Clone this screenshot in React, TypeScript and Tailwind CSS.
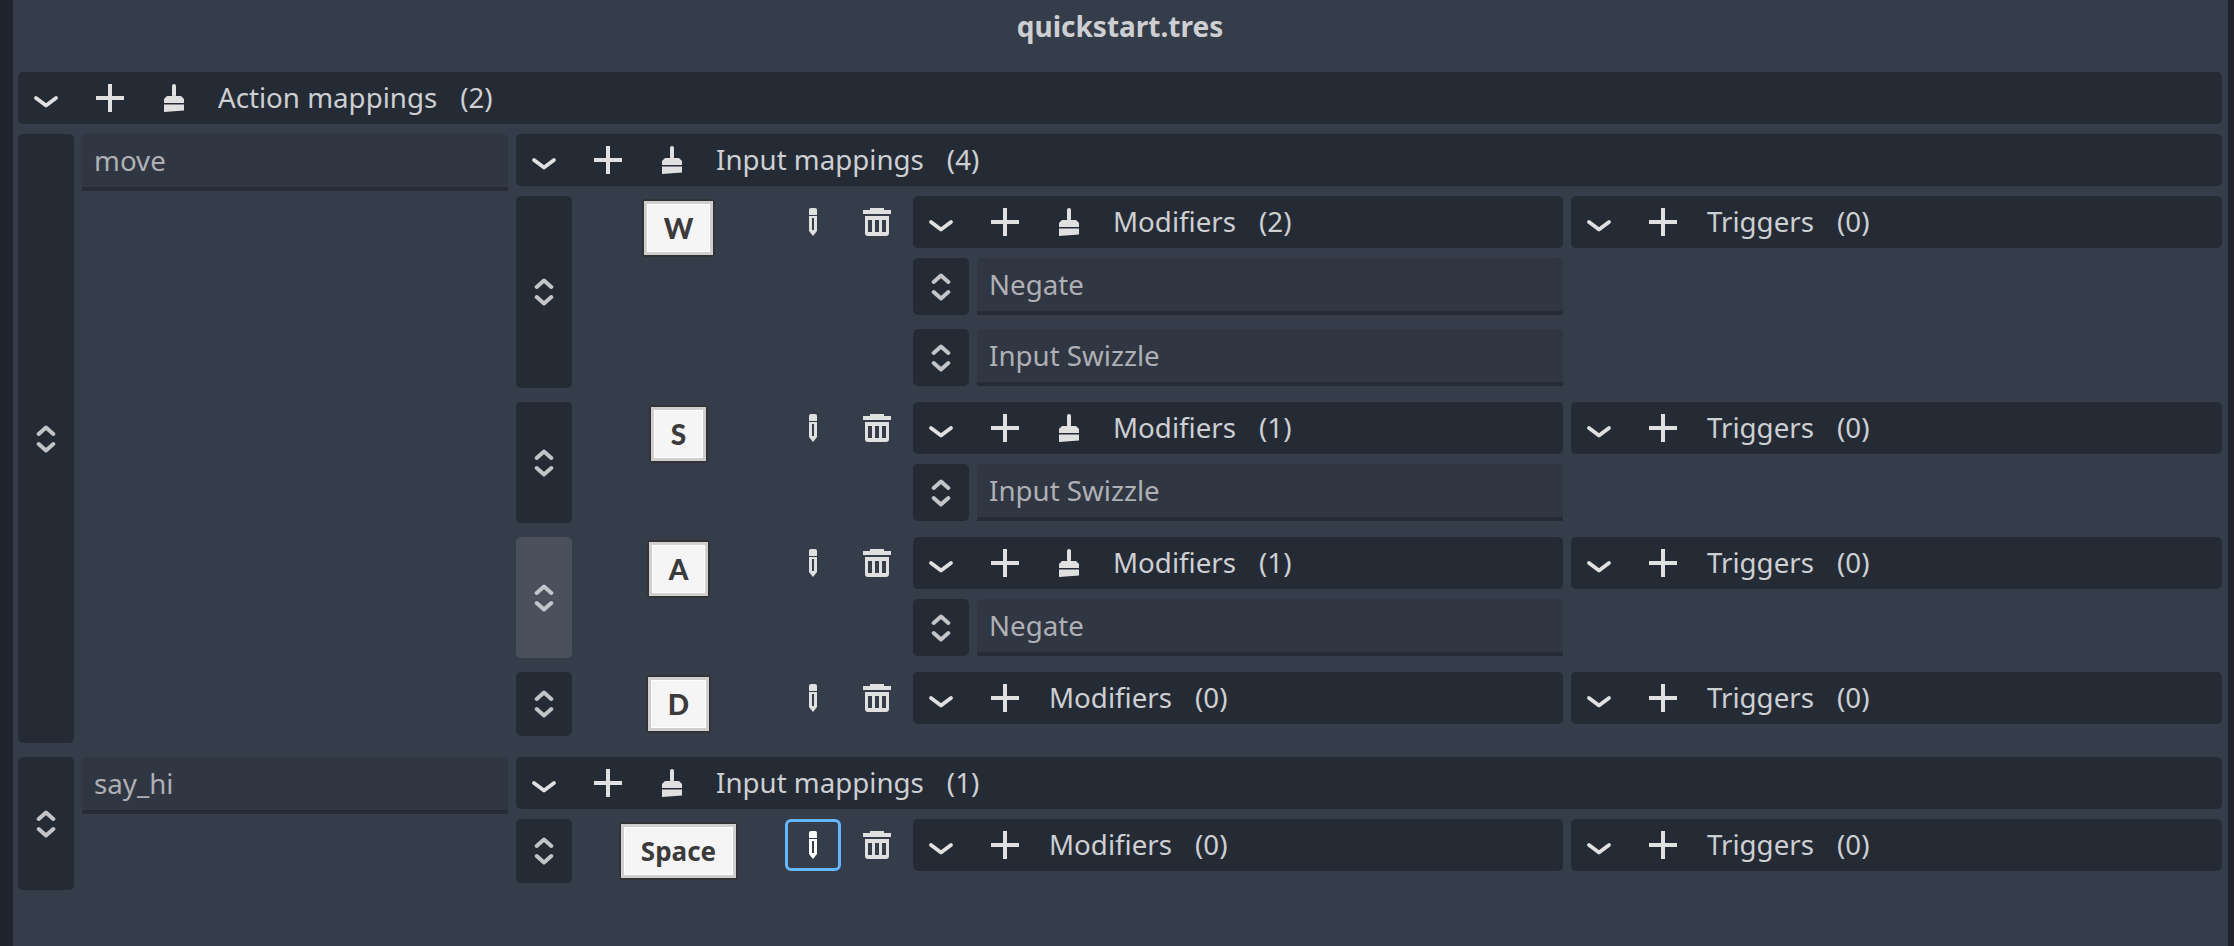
import React from "react";

function Chevron() {
  return (
    <svg width="28" height="28" viewBox="0 0 28 28" fill="none">
      <polyline points="4,14 14,21.5 24,14" stroke="#e0e0e0" strokeWidth="3.8" strokeLinecap="round" strokeLinejoin="round" />
    </svg>
  );
}

function Plus() {
  return (
    <svg width="28" height="28" viewBox="0 0 28 28" fill="#e0e0e0">
      <rect x="12" y="0" width="4" height="28" />
      <rect x="0" y="12" width="28" height="4" />
    </svg>
  );
}

function Brush() {
  return (
    <svg width="20" height="28" viewBox="0 0 20 28" fill="#e0e0e0">
      <rect x="8" y="0" width="4" height="13" rx="2" />
      <path d="M0 19V15L3 12H17L20 15V19Z" />
      <path d="M0 20.5H20V26.5L0 28Z" />
    </svg>
  );
}

function Pencil({ color = "#e0e0e0" }: { color?: string }) {
  return (
    <svg width="8" height="28" viewBox="0 0 8 28" fill={color}>
      <path d="M0 7V2A2 2 0 0 1 2 0H6A2 2 0 0 1 8 2V7Z" />
      <path fillRule="evenodd" d="M0 8H8V23L4 28L0 23ZM3 10V22H5V10Z" />
    </svg>
  );
}

function Trash() {
  return (
    <svg width="28" height="28" viewBox="0 0 28 28" fill="#e0e0e0">
      <path d="M7 0H21V2H28V6H0V2H7Z" />
      <path fillRule="evenodd" d="M2 8H26V25A3 3 0 0 1 23 28H5A3 3 0 0 1 2 25ZM5 12V24H9V12ZM12 12V24H16V12ZM19 12V24H23V12Z" />
    </svg>
  );
}

function Reorder() {
  return (
    <svg width="20" height="28" viewBox="0 0 20 28" fill="none">
      <polyline points="2.7,9 10,2.6 17.3,9" stroke="#c2c4c8" strokeWidth="4" strokeLinecap="round" strokeLinejoin="round" />
      <polyline points="2.7,19 10,25.4 17.3,19" stroke="#c2c4c8" strokeWidth="4" strokeLinecap="round" strokeLinejoin="round" />
    </svg>
  );
}

function IconButton({ children }: { children: React.ReactNode }) {
  return <div className="flex h-[52px] w-14 shrink-0 items-center justify-center">{children}</div>;
}

function Header({ title, count, clear }: { title: string; count: number; clear?: boolean }) {
  return (
    <div className="flex h-[52px] items-center gap-2 rounded-[5px] bg-[#252b35] pb-px text-[27.7px] text-[#cdcfd2]">
      <IconButton>
        <Chevron />
      </IconButton>
      <IconButton>
        <Plus />
      </IconButton>
      {clear && (
        <IconButton>
          <Brush />
        </IconButton>
      )}
      <span className="ml-2">{title}</span>
      <span className="ml-[15px]">({count})</span>
    </div>
  );
}

function ReorderBar({ hover }: { hover?: boolean }) {
  return (
    <div
      className={
        hover
          ? "flex w-14 shrink-0 items-center justify-center self-stretch rounded-[5px] bg-[#4a515d]"
          : "flex w-14 shrink-0 items-center justify-center self-stretch rounded-[5px] bg-[#252b35]"
      }
    >
      <Reorder />
    </div>
  );
}

function TextField({ value }: { value: string }) {
  return (
    <div className="flex h-[57px] flex-1 items-center rounded-t-[5px] border-b-4 border-[#262b35] bg-[#303642] px-3 pt-px text-[27.7px] text-[#aeb0b5]">
      {value}
    </div>
  );
}

function Modifier({ name }: { name: string }) {
  return (
    <div className="flex gap-2">
      <ReorderBar />
      <TextField value={name} />
    </div>
  );
}

function Key({ label }: { label: string }) {
  const word = label.length > 1;
  return (
    <div className="rounded-[4px] border-2 border-[#333336]">
      <div
        className={
          word
            ? "flex h-[54px] items-center justify-center border-[3px] border-[#cfcfcf] bg-[#f5f5f5] px-[17px] text-[26px] font-bold text-[#3b3b3b] shadow-[inset_0_0_0_1px_#ffffff]"
            : "flex h-[54px] items-center justify-center border-[3px] border-[#cfcfcf] bg-[#f5f5f5] px-[17px] font-['Lato',sans-serif] text-[28px] font-black text-[#3b3b3b] shadow-[inset_0_0_0_1px_#ffffff]"
        }
      >
        {label}
      </div>
    </div>
  );
}

type Mapping = { key: string; modifiers: string[]; hover?: boolean; focused?: boolean };

function MappingRow({ mapping }: { mapping: Mapping }) {
  const { key, modifiers, hover, focused } = mapping;
  return (
    <div className="flex min-h-16 gap-2">
      <ReorderBar hover={hover} />
      <div className="flex w-[197px] shrink-0 items-start justify-center pt-[3px]">
        <Key label={key} />
      </div>
      {focused ? (
        <div className="flex h-[52px] w-14 shrink-0 items-center justify-center rounded-[6px] border-[3px] border-[#66b5ff]">
          <Pencil color="#ffffff" />
        </div>
      ) : (
        <IconButton>
          <Pencil />
        </IconButton>
      )}
      <IconButton>
        <Trash />
      </IconButton>
      <div className="grid flex-1 grid-cols-[650px_1fr] items-start gap-2">
        <div className="flex flex-col pb-[2px]">
          <Header title="Modifiers" count={modifiers.length} clear={modifiers.length > 0} />
          {modifiers.length > 0 && (
            <div className="mt-[10px] flex flex-col gap-[14px]">
              {modifiers.map((m) => (
                <Modifier key={m} name={m} />
              ))}
            </div>
          )}
        </div>
        <Header title="Triggers" count={0} />
      </div>
    </div>
  );
}

function ActionRow({ name, mappings }: { name: string; mappings: Mapping[] }) {
  return (
    <div className="flex gap-2">
      <ReorderBar />
      <div className="w-[426px] shrink-0">
        <TextField value={name} />
      </div>
      <div className="flex min-w-0 flex-1 flex-col pb-[7px]">
        <Header title="Input mappings" count={mappings.length} clear />
        <div className="mt-[10px] flex flex-col gap-[14px]">
          {mappings.map((m) => (
            <MappingRow key={m.key} mapping={m} />
          ))}
        </div>
      </div>
    </div>
  );
}

export default function App() {
  return (
    <div className="flex h-[946px] w-[2234px] overflow-hidden bg-[#363d4a] font-['Noto_Sans',sans-serif]">
      <div className="w-[13px] shrink-0 bg-[#1f242c]" />
      <main className="flex min-w-0 flex-1 flex-col pl-[5px] pr-[6px]">
        <div className="flex h-[52px] items-center justify-center text-[28px] font-bold text-[#cdcfd2]">
          quickstart.tres
        </div>
        <div className="mt-5">
          <Header title="Action mappings" count={2} clear />
        </div>
        <div className="mt-[10px] flex flex-col gap-[14px]">
          <ActionRow
            name="move"
            mappings={[
              { key: "W", modifiers: ["Negate", "Input Swizzle"] },
              { key: "S", modifiers: ["Input Swizzle"] },
              { key: "A", modifiers: ["Negate"], hover: true },
              { key: "D", modifiers: [] },
            ]}
          />
          <ActionRow name="say_hi" mappings={[{ key: "Space", modifiers: [], focused: true }]} />
        </div>
      </main>
      <div className="w-[6px] shrink-0 bg-[#1f242c]" />
    </div>
  );
}
